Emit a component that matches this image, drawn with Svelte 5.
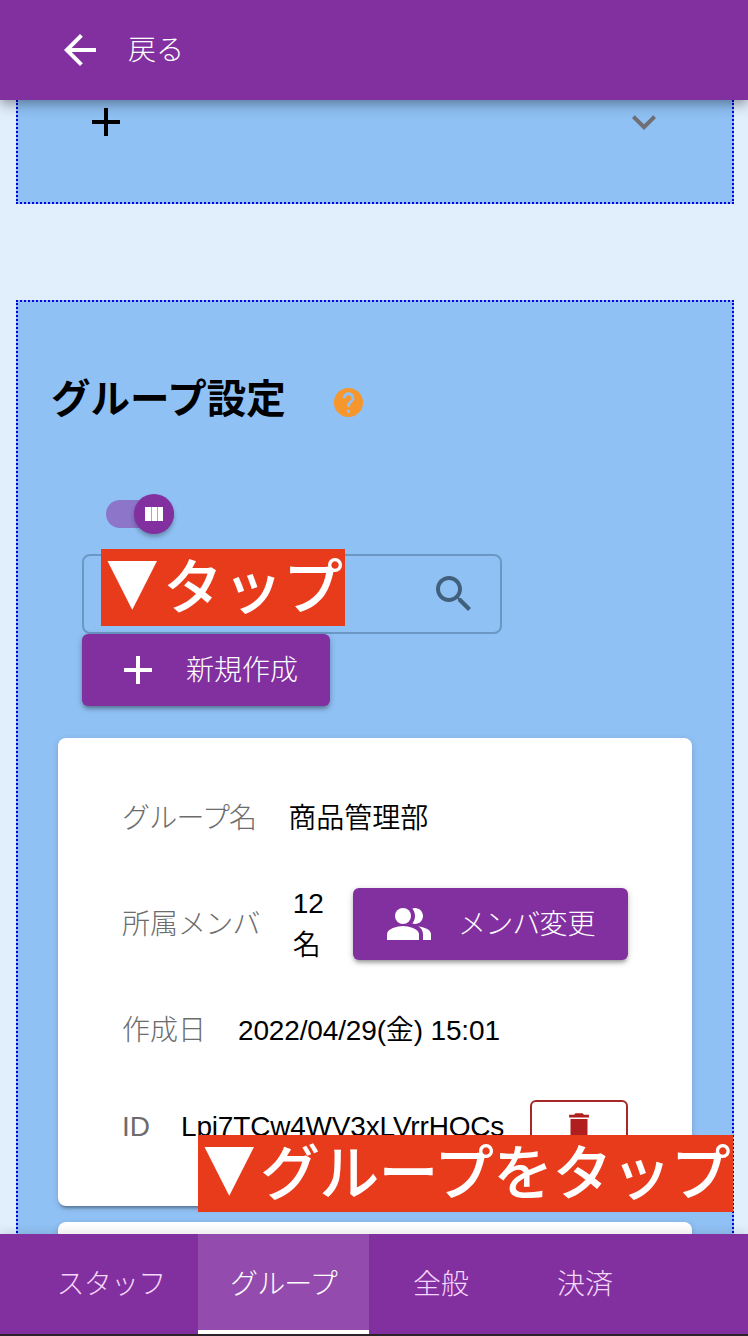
<script>
  const tabs = [
    { label: 'スタッフ', width: 174, kana: true },
    { label: 'グループ', width: 171, kana: true, active: true },
    { label: '全般', width: 144 },
    { label: '決済', width: 144 }
  ];
</script>

<div class="screen">
  <header>
    <svg class="i48" viewBox="0 0 24 24"><path d="M20 11H7.83l5.59-5.59L12 4l-8 8 8 8 1.41-1.41L7.83 13H20z" /></svg>
    <span>戻る</span>
  </header>

  <main>
    <section class="first">
      <svg class="i48" viewBox="0 0 24 24"><path d="M19 13h-6v6h-2v-6H5v-2h6V5h2v6h6z" /></svg>
      <svg class="i48 chev" viewBox="0 0 24 24"><path d="M7.41 8.59 12 13.17l4.59-4.58L18 10l-6 6-6-6z" /></svg>
    </section>

    <section class="second">
      <div class="title">
        <h1>グループ設定</h1>
        <svg class="help" viewBox="0 0 24 24"><path d="M12 2C6.48 2 2 6.48 2 12s4.48 10 10 10 10-4.48 10-10S17.52 2 12 2zm1 17h-2v-2h2v2zm2.07-7.75-.9.92C13.45 12.9 13 13.5 13 15h-2v-.5c0-1.1.45-2.1 1.17-2.83l1.24-1.26c.37-.36.59-.86.59-1.41 0-1.1-.9-2-2-2s-2 .9-2 2H8c0-2.21 1.79-4 4-4s4 1.79 4 4c0 .88-.36 1.68-.93 2.25z" /></svg>
      </div>

      <div class="switch">
        <div class="thumb"><i></i><i></i><i></i></div>
      </div>

      <div class="search">
        <svg class="i48" viewBox="0 0 24 24"><path d="M15.5 14h-.79l-.28-.27C15.41 12.59 16 11.11 16 9.5 16 5.91 13.09 3 9.5 3S3 5.91 3 9.5 5.91 16 9.5 16c1.61 0 3.09-.59 4.23-1.57l.27.28v.79l5 4.99L20.49 19l-4.99-5zm-6 0C7.01 14 5 11.99 5 9.5S7.01 5 9.5 5 14 7.01 14 9.5 11.99 14 9.5 14z" /></svg>
      </div>

      <button class="btn create">
        <svg class="i48" viewBox="0 0 24 24"><path d="M19 13h-6v6h-2v-6H5v-2h6V5h2v6h6z" /></svg>
        <span>新規作成</span>
      </button>

      <article class="card">
        <div class="row">
          <span class="label k">グループ名</span><span class="value">商品管理部</span>
        </div>
        <div class="row members">
          <span class="label">所属<span class="k">メンバ</span></span>
          <span class="value count">12<br />名</span>
          <button class="btn change">
            <svg class="i48" viewBox="0 0 24 24"><path d="M16.67 13.13C18.04 14.06 19 15.32 19 17v3h4v-3c0-2.18-3.57-3.47-6.33-3.87z" /><circle cx="9" cy="8" r="4" /><path d="M15 12c2.21 0 4-1.79 4-4s-1.79-4-4-4c-.47 0-.91.1-1.33.24C14.5 5.27 15 6.58 15 8s-.5 2.73-1.33 3.76c.42.14.86.24 1.33.24zM9 13c-2.67 0-8 1.34-8 4v3h16v-3c0-2.66-5.33-4-8-4z" /></svg>
            <span><span class="k">メンバ</span>変更</span>
          </button>
        </div>
        <div class="row date">
          <span class="label">作成日</span><span class="value">2022/04/29(金) 15:01</span>
        </div>
        <div class="row id">
          <span class="label">ID</span><span class="value">Lpi7TCw4WV3xLVrrHOCs</span>
          <button class="delete" aria-label="削除">
            <svg viewBox="0 0 24 24"><path d="M19 4h-3.5l-1-1h-5l-1 1H5v2h14M6 19a2 2 0 0 0 2 2h8a2 2 0 0 0 2-2V7H6v12z" /></svg>
          </button>
        </div>
      </article>
      <article class="card next"></article>
    </section>
  </main>

  <nav>
    {#each tabs as tab}
      <div class="tab" class:active={tab.active} style="width: {tab.width}px">
        <span class:k={tab.kana}>{tab.label}</span>
      </div>
    {/each}
  </nav>

  <div class="callout tap"><span class="mark">▼</span><span>タップ</span></div>
  <div class="callout group"><span class="mark">▼</span><span>グループをタップ</span></div>
</div>

<style>
  :global(body) { margin: 0; }
  .screen {
    position: relative;
    display: flex;
    flex-direction: column;
    width: 748px;
    height: 1336px;
    overflow: hidden;
    box-sizing: border-box;
    background: #e1eefc;
    color: #000;
    font: 350 28px/42px "Liberation Sans", "Noto Sans CJK JP", sans-serif;
  }
  * { box-sizing: border-box; }
  svg { display: block; flex: none; fill: currentColor; }
  .i48 { width: 48px; height: 48px; }
  .k { letter-spacing: -0.8px; }

  header {
    z-index: 1;
    flex: none;
    display: flex;
    align-items: center;
    gap: 24px;
    height: 100px;
    padding-left: 56px;
    color: #fff;
    background: #82309f;
    box-shadow: 0 4px 8px -2px rgba(0, 0, 0, .2), 0 8px 10px rgba(0, 0, 0, .12), 0 2px 20px rgba(0, 0, 0, .1);
  }
  header span, .btn > span, .tab span { padding-top: 2px; }
  header span, .btn > span, .tab span, .label { font-weight: 300; }

  main { flex: 1; min-height: 0; overflow: hidden; padding: 0 14px 0 16px; }
  section { background: #90c1f4; border: 2px dotted #0000e0; }
  .first {
    display: flex;
    justify-content: space-between;
    height: 104px;
    margin-bottom: 96px;
    padding: 0 64px;
    border-top: 0;
  }
  .first svg { margin-top: -2px; }
  .chev { color: #706f74; }

  .second { height: 1100px; padding: 66px 40px 0; }
  .title { display: flex; align-items: center; height: 60px; margin-left: -7px; }
  h1 { margin: 0; padding-top: 1px; width: 280px; font-size: 39.5px; font-weight: 700; line-height: 60px; white-space: nowrap; }
  .help { width: 35px; height: 35px; margin-top: 9px; color: #f5972d; }

  .switch {
    display: flex;
    justify-content: flex-end;
    align-items: center;
    width: 68px;
    height: 28px;
    margin: 72px 0 0 48px;
    border-radius: 14px;
    background: #8d75c9;
  }
  .thumb {
    display: flex;
    align-items: center;
    justify-content: center;
    width: 40px;
    height: 40px;
    border-radius: 50%;
    background: #82309f;
    box-shadow: 0 3px 4px rgba(0, 0, 0, .28);
  }
  .thumb i { width: 6px; height: 14px; background: #fff; }
  .thumb i + i { border-left: 1px solid #c795d4; }

  .search {
    display: flex;
    justify-content: flex-end;
    align-items: center;
    width: 420px;
    height: 80px;
    margin: 26px 0 0 24px;
    padding-right: 22px;
    border: 2px solid #6b97c4;
    border-radius: 8px;
    color: #41607c;
  }

  .btn {
    display: flex;
    align-items: center;
    height: 72px;
    border: 0;
    border-radius: 6px;
    color: #fff;
    background: #82309f;
    font: inherit;
    white-space: nowrap;
    box-shadow: 0 4px 4px -2px rgba(0, 0, 0, .28), 0 2px 6px rgba(0, 0, 0, .24);
  }
  .create { width: 248px; margin-left: 24px; padding: 0 0 0 32px; gap: 24px; }

  .card {
    width: 634px;
    height: 468px;
    margin-top: 32px;
    padding: 60px 64px 0 64px;
    border-radius: 8px;
    background: #fff;
    box-shadow: 0 4px 3px -2px rgba(0, 0, 0, .3), 0 2px 6px rgba(0, 0, 0, .16);
  }
  .next { margin-top: 16px; }
  .row { display: flex; align-items: center; height: 42px; margin-bottom: 42px; white-space: nowrap; }
  .label { margin-right: 32px; color: #6c6c6c; }
  .members { height: 84px; margin-bottom: 43px; }
  .members .label, .date .label { padding-top: 2px; }
  .count { padding-top: 2px; margin-left: 1px; }
  .change { width: 275px; margin-left: auto; padding: 0 0 0 32px; gap: 25px; }
  .date { margin-bottom: 0; }
  .date .value { letter-spacing: -.15px; padding-top: 2px; }
  .id { height: 52px; margin-top: 49px; }
  .id .label { margin-right: 31px; padding-top: 2px; }
  .id .value { letter-spacing: -.18px; padding-top: 2px; }
  .delete {
    display: flex;
    align-items: center;
    justify-content: center;
    width: 98px;
    height: 52px;
    margin-left: auto;
    padding: 0;
    border: 2px solid #a52727;
    border-radius: 6px;
    background: #fff;
    color: #b01e1e;
  }
  .delete svg { width: 34px; height: 34px; }

  nav {
    z-index: 1;
    flex: none;
    display: flex;
    height: 102px;
    padding-left: 24px;
    background: #82309f;
    border-bottom: 2px solid #2b2329;
    box-shadow: 0 -2px 10px rgba(0, 0, 0, .1);
  }
  .tab {
    display: flex;
    align-items: center;
    justify-content: center;
    height: 100px;
    color: #f6d6fa;
  }
  .active { color: #fff; background: #934cad; box-shadow: inset 0 -4px #fff; }

  .callout {
    position: absolute;
    z-index: 2;
    display: flex;
    height: 77px;
    background: #e83b1b;
    color: #fff;
    font: 500 60px/67px "Noto Sans CJK JP", sans-serif;
    white-space: nowrap;
    padding-left: 5px;
  }
  .mark { width: 57px; font-size: 52.5px; font-weight: 700; line-height: 67px; transform: translateY(-1px) scaleY(1.14); }
  .tap { left: 101px; top: 549px; width: 244px; }
  .group { left: 198px; top: 1135px; width: 535px; letter-spacing: -.8px; }
</style>
